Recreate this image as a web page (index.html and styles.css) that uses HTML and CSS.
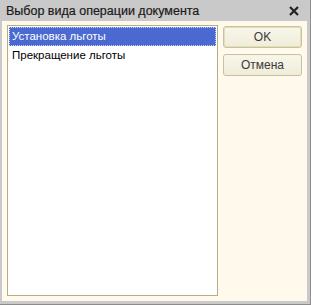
FILE: index.html
```html
<!DOCTYPE html>
<html lang="ru">

<head>
  <meta charset="UTF-8">
  <title>Выбор вида операции документа</title>
  <link rel="stylesheet" href="styles.css">
</head>

<body>
  <div class="window">
    <div class="titlebar">
      <span class="title">Выбор вида операции документа</span>
      <svg class="close" width="10" height="10" viewBox="0 0 10 10">
        <path d="M1 1 L9 9 M9 1 L1 9" stroke="#222" stroke-width="2.2" fill="none" />
      </svg>
    </div>

    <div class="content">
      <ul class="list">
        <li class="item selected">Установка льготы</li>
        <li class="item">Прекращение льготы</li>
      </ul>

      <div class="buttons">
        <button type="button" class="btn btn-default">OK</button>
        <button type="button" class="btn">Отмена</button>
      </div>
    </div>
  </div>
</body>

</html>
```

FILE: styles.css
```css
* {
  box-sizing: border-box;
}

html,
body {
  margin: 0;
  height: 100%;
}

body {
  font-family: 'Liberation Sans', Arial, sans-serif;
  font-size: 12px;
  color: #000;
}

.window {
  display: flex;
  flex-direction: column;
  width: 311px;
  height: 305px;
  background: #c9c9c9;
  border-right: 1px solid #8c8c8c;
  border-bottom: 1px solid #8c8c8c;
  padding: 0 3px 3px 2px;
}

.titlebar {
  display: flex;
  align-items: center;
  justify-content: space-between;
  height: 21px;
  padding: 0 8px 0 4px;
  flex-shrink: 0;
}

.title {
  font-size: 12.5px;
  color: #1a1a1a;
  -webkit-text-stroke: 0.2px #1a1a1a;
}

.close {
  display: block;
}

.content {
  flex: 1;
  display: flex;
  gap: 5px;
  background: #fffaeb;
  padding: 4px 5px 5px 5px;
}

.list {
  flex: 1;
  margin: 0;
  padding: 1px;
  list-style: none;
  background: #fff;
  border: 1px solid #b5ae84;
}

.item {
  height: 19px;
  line-height: 17px;
  padding: 0 2px;
  font-size: 11.5px;
  border: 1px solid transparent;
}

.selected {
  background: #4b6ad1;
  color: #fff;
  border: 1px dotted #c9d3f5;
}

.buttons {
  display: flex;
  flex-direction: column;
  gap: 6px;
  width: 79px;
  padding-top: 1px;
}

.btn {
  height: 22px;
  padding: 0;
  font-family: 'Liberation Sans', Arial, sans-serif;
  font-size: 12px;
  font-weight: normal;
  color: #3a3a3a;
  background: linear-gradient(#f8f6ea, #efecda);
  border: 1px solid #c7c19f;
  border-radius: 3px;
}

.btn-default {
  box-shadow: inset 0 0 0 1px #e6dfb4;
}
```
